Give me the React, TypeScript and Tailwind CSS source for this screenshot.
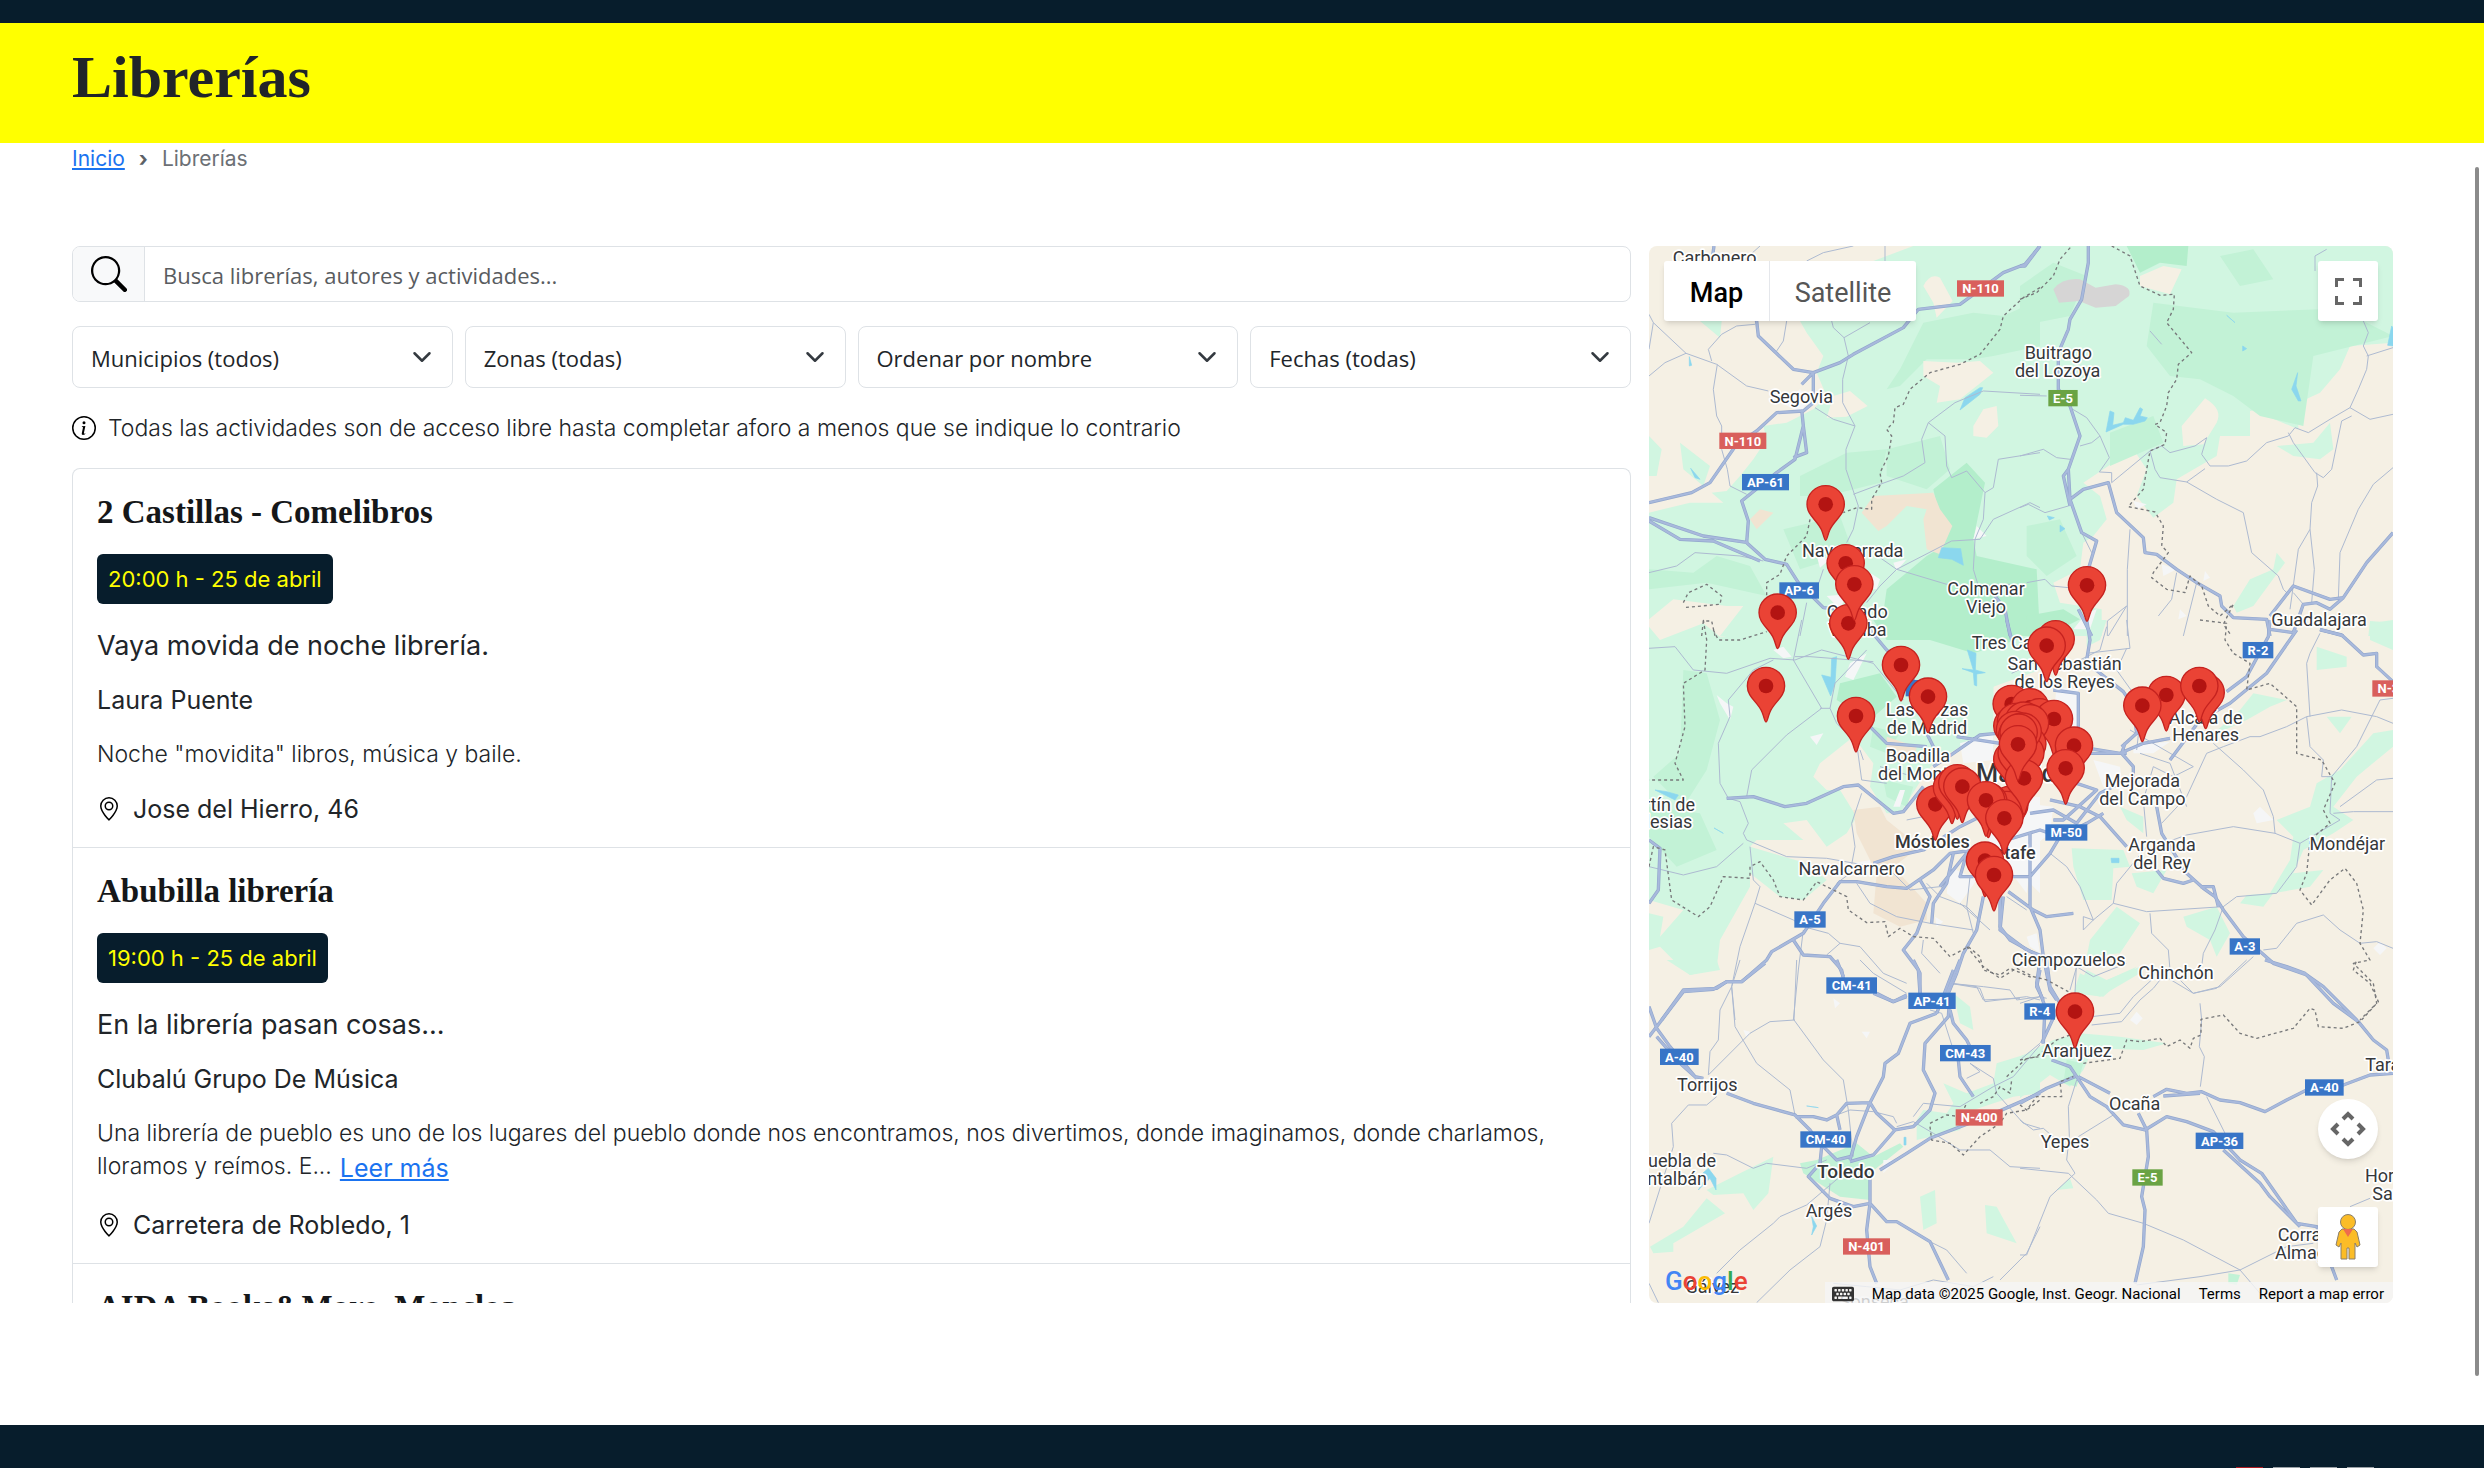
import { BsSearch, BsInfoCircle, BsGeoAlt } from "react-icons/bs";
import { FaKeyboard } from "react-icons/fa";

type Sheet = "a" | "b" | "c" | "d" | "e" | "f";
type Shape = [Sheet, string];

// The map is drawn from six sheets, each with its own origin
const origin: Record<Sheet, [number, number]> = {
  a: [-27, -30],
  b: [1113, -30],
  c: [-27, 1122],
  d: [873, 1122],
  e: [-27, 2142],
  f: [1113, 2142],
};

const forest: Shape[] = [
  ["a", "M820 30L700 75L560 75L480 255L500 290L550 360L530 410L560 480L520 520L440 560L370 570L380 610L340 670L300 720L260 765L215 770L250 800L150 800L27 830V1150L100 1090L260 1110L310 1110L240 1200H1210V30Z"],
  ["a", "M27 600L65 640L50 720L27 720ZM120 620L210 690L190 750L130 700ZM180 255H245L240 305Z"],
  ["b", "M1119 30V320L990 330L960 400L900 470L835 500V580L740 540L720 520L690 525V600H600L590 660L470 730L460 800L400 845L350 780L380 700L340 640L190 740L240 780L260 850L220 900L190 920L180 1000L100 1040L120 1100L245 1120V1200H0V30Z"],
  ["b", "M640 1110L690 1030L760 1000L770 950L795 980L700 1110L650 1130ZM770 630L880 620L930 560L940 640L900 670L820 660ZM1050 1155L1119 1160V1200H1045Z"],
  ["c", "M27 20L60 60L190 10L240 50L330 40L470 0H1200V150L1060 200V400L960 380L880 430L850 470L780 580L740 580L690 500L700 430L640 350L540 430L520 470L560 510L600 510L650 590L620 640L560 680L500 600L430 610L490 660L350 660L330 680L500 730L560 780L490 840L420 830L330 760V800L240 960L230 1045L150 1065L100 1020L60 980L27 990V880L70 890L60 950L130 870L27 840Z"],
  ["d", "M0 0H190V60L200 160L160 200L155 400L120 410L60 350L0 380ZM440 0H500L480 60L440 80ZM395 685L550 690L570 740L520 745L515 840L430 840L400 740ZM450 960L530 860L600 910L540 1000L440 1010ZM730 890L830 860L870 940L830 1010L810 960L740 920ZM575 760L680 750L640 820L590 800ZM540 560L610 590V640L560 600Z"],
  ["d", "M1010 600L1110 560L1130 490L1200 450L1300 340L1359 330V380L1250 470L1180 560L1240 600L1180 640L1090 690L1060 760L1150 750L1110 800L1000 820L970 860L900 850L920 825L990 820L1050 720L1060 650ZM1130 80L1220 110V140L1130 150ZM1160 290L1235 290L1200 340ZM1290 10L1359 0V90L1290 60ZM810 350L900 270L940 220L1040 240L990 260L920 300ZM400 1120L420 1060L480 1090L590 1040L490 1130Z"],
  ["e", "M80 0H230L240 30L150 45ZM940 100L990 140L1000 210L960 190ZM910 370L980 400L1060 370L1070 310L1200 270V400L1120 410L1000 450L960 510L830 540V480L850 450L920 460L940 430ZM200 690L300 640L400 590L385 700L340 750L310 700L220 705ZM30 860L130 800L200 715L255 760L100 850L100 875L40 880ZM840 710L885 690L890 790L850 810ZM1035 735L1070 740L1130 850L1040 820Z"],
  ["f", "M0 290L100 240L180 220L300 230L440 250L370 270L220 265L190 330L150 380L90 345L0 415ZM170 90L200 30L260 60L360 20V40L240 110ZM110 690L150 655L160 685Z"],
];

const denseForest: Shape[] = [
  ["a", "M780 400L850 260L1000 230L1090 240L1200 190V330L1060 360L1000 370L860 370L780 450L740 460ZM480 720L620 650L740 640L720 740L560 780L480 780ZM27 1000L160 1010L230 960L330 990L380 1080L200 1040L27 1060ZM820 620L900 600L930 700L860 760L740 720L740 640ZM430 880L600 840L640 950L480 1000Z"],
  ["b", "M0 150L100 80L200 120L150 240L0 270ZM400 200L640 230L900 220L1030 255L1119 300L1000 330L880 360L850 570L720 540L640 480L540 430L450 420L380 330ZM20 870L120 850L170 960L80 1020L20 960ZM270 590L400 540L430 620L270 690ZM600 60L700 40L760 130L660 150Z"],
  ["c", "M130 150L200 160L240 300L200 450L130 560L40 470L120 400ZM27 560L180 580L230 690L110 740L27 650ZM700 320L780 340L740 400L690 380ZM730 480L820 500L800 560L740 530Z"],
  ["e", "M480 610L530 600L650 550L700 590L780 550L790 560L690 640V720L600 710L490 640Z"],
  ["f", "M140 300L190 310L170 380L130 370ZM625 940L660 945L650 975L625 970Z"],
];

const deepForest: Shape[] = [
  ["a", "M880 760L980 680L1035 740L1000 910L1010 960L1190 1000L1200 1200H720L740 1060L860 960L910 930L900 850Z"],
  ["b", "M320 30H505L500 90L420 80L360 110ZM20 1140L130 1120L180 1150L120 1180L20 1190Z"],
  ["c", "M700 0H1180L1130 60L1000 100L870 60L740 60ZM600 190L720 160L770 230L690 300L590 240Z"],
];

const bare: Shape[] = [
  ["a", "M850 150Q870 110 900 125L938 195L890 245L880 200ZM850 375L950 380L1020 375L1060 410L960 490L890 500L900 450L850 420ZM1000 570L1030 520L1070 510L1075 570L1040 605L1000 600ZM580 480L630 465L683 510L620 542L560 545Z"],
  ["b", "M360 120L430 90L485 100L450 175L360 150ZM555 487Q610 520 590 560L550 625L490 630L485 570Z"],
];

const highland: Shape[] = [
  ["a", "M665 830L700 780L880 770L900 820L937 870L900 955L860 940L850 850L860 820L800 810L740 870L715 885ZM330 850L360 820L400 830L350 880Z"],
  ["c", "M640 570L720 560L740 600L840 680L760 740L860 850L860 900L780 920L700 880L710 760L650 640ZM740 350L830 380L820 430L740 400Z"],
];

const town: Shape[] = [
  ["a", "M1010 870L1040 900L1000 910ZM530 960L570 970L540 995ZM690 1010L720 1030L710 1060L680 1060ZM560 1080L620 1075L600 1120ZM760 980L800 970L770 1005ZM425 500L480 460L510 490L480 530Z"],
  ["b", "M425 985L470 1000L430 1020ZM200 1130L230 1120L210 1180L160 1180ZM555 1005L570 1025L550 1035ZM480 1120L500 1140L475 1150ZM340 795L380 805L350 820Z"],
  ["c", "M630 130L680 100L640 180L615 170ZM510 350L550 340L530 375ZM230 225L260 250L280 260L270 300L240 250ZM400 90L430 80L455 110L430 115ZM780 510L795 510L780 560L760 560ZM960 370L1060 340L1060 420L970 430ZM1060 540L1200 530V820L1100 720L1040 700ZM930 740L1010 780L960 850L920 820ZM885 890L910 905L890 920ZM640 730L690 720L690 750Z"],
  ["d", "M160 540L340 560L330 640L280 680L260 820L170 700ZM350 200L415 210V340L440 400L330 380ZM460 420L540 440L550 510L490 500ZM580 375L690 365L640 400L580 400ZM940 580L960 560L1000 600L950 610ZM260 950L290 940L300 1000L270 980ZM1300 985L1320 965L1340 985L1320 1005Z"],
  ["e", "M665 215L690 215L680 235ZM730 600L770 600L730 640ZM310 210L330 215L320 235ZM580 115L600 130L585 145Z"],
  ["f", "M330 180L350 155L368 175L350 195Z"],
];

const water: Shape[] = [
  ["a", "M960 522L975 485L1020 455L1028 455L1020 475ZM895 965L905 935L962 938L970 988L935 970ZM148 362L155 388L148 390ZM152 697L180 730L165 725Z"],
  ["b", "M258 588L270 525L282 530L278 568L310 560L316 545L340 553L360 515L368 520L360 540L382 545L375 555L340 565L310 565ZM815 460L833 410L828 450L843 495L835 495ZM1103 328L1115 270L1119 275V330ZM82 840L103 845L88 852ZM120 868L135 878L120 888ZM668 330L680 338L668 345ZM620 238L645 260Z"],
  ["c", "M575 115L590 110L585 190L572 228L545 165L573 172ZM45 510L80 515L115 525L105 540ZM222 624L250 640Z"],
  ["d", "M82 90L108 100L106 150L136 158L110 162L110 198L103 195L100 158L66 146L100 150ZM513 715H537V728H515Z"],
  ["e", "M205 625L228 655L228 690L210 655L175 690L190 665L188 640ZM515 770L530 798L515 825L520 800ZM500 438L535 443ZM792 532H798V555H792Z"],
];

const lanes: Shape[] = [
  ["a", "M27 235L40 260L138 352L230 385L320 450L385 465M40 260L27 340M138 352L75 380L27 420M232 385L220 460L230 540L245 570V640L262 700L270 750L320 775M345 265L290 270L245 295L205 340L215 375M440 255L430 315L410 345M500 75L550 50L640 30M735 30V80L720 110M575 255L580 275L612 305L690 260M612 305L625 360L608 430V500L645 570L618 640V700L655 810L640 880L620 920M525 515L580 550L645 570M1200 475L1030 465L945 500L865 560L845 610L855 680L790 720L720 745L640 775M865 560L915 600L920 690L935 725L980 705L1035 770L1030 850L1005 910L1000 1000L1015 1050L1110 1045M1200 650L1075 670L1060 755L1035 770M1200 815L1170 800L1060 850L1020 910L935 915L770 1000L720 1050L680 1100M720 965L770 1000L920 1045L1000 1050M27 1010L110 990L165 950L300 960L370 975M550 1000L530 1060M500 1100L480 1200M360 30L260 120"],
  ["b", "M0 478L80 480M150 515L200 545L240 600L268 665L238 708L275 710V740L390 645L425 630L450 650L525 630L560 605L545 655L570 690H625L680 675L740 620L805 600L825 575L865 590L930 550L990 515L1015 460L1040 400L1045 360L1030 330L1045 290L1030 255M1040 360L1119 335M990 515L1050 550L1119 535M995 540L965 555L935 700L910 725L885 710L820 620L805 590M390 645L405 700L420 725L500 738L555 698M500 738L590 790L670 830L695 950L775 1020L790 1060L805 1075M890 710L893 750L875 800L870 880L835 940L810 1120M870 880L883 1000L875 1100M1119 695L1060 745L1015 820L960 950L955 1090M180 630L215 620L240 600M0 660L70 640L110 665L150 670M0 815L25 805L75 830L145 810M330 880L322 1000V1200M470 1010L455 1090L415 1140M530 1040L490 1200M20 1040L75 1030L95 1050L145 1055M262 1200V1155L320 1110L265 1200M185 890L215 950M390 285L425 325M920 40L885 60V105M820 1070L850 1105"],
  ["c", "M27 85L105 80L160 150L260 160L390 115L465 120L545 90L700 130L790 240M460 120L485 0M460 120L545 265L440 345L335 450L320 530M465 110L510 110L700 125M400 120L340 150L265 240L270 290L235 370L240 490L265 535L300 545L325 610L310 640L320 660L440 710L560 715L700 740M680 90L585 190L570 265H540M570 265L590 310L650 370L665 480L740 490M665 520L635 610L645 680L630 760L590 790M310 670L230 740L130 765L27 740M330 680L340 780L360 800L345 850L300 980L275 1100L285 1200M345 850L460 900L490 920L565 940L600 970L660 980L730 1060L800 1090M490 930L475 1050L460 1200M600 970L560 1005M650 790L690 850L770 890L870 910L1000 930M860 790L900 830L980 860L1020 900M930 1090L1030 1100L1110 1110L1130 1140L1200 1130M720 440L820 470M660 390L670 420M860 610L960 560M800 600L850 590L900 610M850 960L845 1000L900 1060M990 770L980 860L1000 940M760 760L810 810L900 800"],
  ["d", "M215 160L300 120L400 130L480 90L500 20M440 100L570 85L560 0M560 85L530 150L580 220L600 300L590 390M600 400L690 430L740 560M570 330L760 440L700 470L640 440L610 540L620 650M800 400L850 380L930 350L960 350L1040 320L1100 290L1205 270L1310 290L1359 310M800 400L740 530L665 610M820 370L910 450L970 510L1000 590L1005 640M670 670L740 645L880 620L1005 640L1080 670L1200 600L1170 580L1175 470L1250 380L1320 240L1359 235M1100 290L1110 380L1150 420L1145 470H1175M1359 475L1310 480L1200 560M1180 580L1240 575L1359 575M1110 290L1100 130L1110 100L1140 40M1080 670L1070 740L1010 820L890 830L850 860L620 875L520 850L460 900L420 800L380 740L330 700M520 850L530 790L620 680M630 880L635 940L685 990L690 1050L760 1120L840 1100L940 1010M970 990L1010 985L1070 910L1150 885L1200 930L1260 970L1310 965L1359 985M850 860L825 930L790 1000L785 1040M560 1030L460 1070L410 1040L390 1110M640 1075L580 1130L540 1180L370 1200M30 1090L110 1100L130 1140L240 1135M430 890L460 900L430 930V890M60 850L150 930M200 830L260 870"],
  ["e", "M300 0L275 80L285 200L350 310L450 390L465 465M275 80L240 150L235 240L210 275L205 345M465 180L390 185L330 220L205 345M470 0L462 180L550 300L610 360L625 450L640 590M230 410L200 435L145 435L95 490L100 560L65 670L27 790M220 580L260 585L340 625L380 610L500 625L560 600M230 940L300 870L400 790L420 770L500 735L600 650M570 670L560 780L540 860L450 930L350 1028M590 465L630 450L700 455L760 470L770 490M660 0L700 40L800 100M870 150L905 160L940 270M930 70L1020 85L1035 125L1160 110L1200 120M980 355L1020 335L990 310L1060 355L1070 400L1150 490L1200 505M820 470L850 430L960 440L1060 380L1120 350L1200 255M770 500L820 485L880 520L960 570L1050 570L1110 620L1200 625M1200 800L1160 880L1080 960M27 970L55 1028M870 845L920 870L980 940M580 970L680 980L780 990L880 960L1000 980L1060 950"],
  ["f", "M0 130L60 110L80 115M215 195L305 185L360 120L400 85L420 60M420 40L520 100L590 85L680 0M540 130L545 180L538 260L553 290L541 380M560 410L615 520L640 580M0 480L40 510L70 505L110 540M175 530L280 465M170 360L145 440L148 530L140 600L165 640L90 710L20 885H0M0 625L145 640L230 720L265 760L370 790L490 840L660 930L540 950L350 975M660 930L750 885L800 860L880 850M660 930L720 1000M165 100L170 0M0 300L60 250M990 740L1050 715"],
];

const highways: Shape[] = [
  ["a", "M222 30L215 80L350 255L355 300L460 400L520 410L600 380L640 355L790 275L835 220L960 205L1090 110L1155 85L1200 30M520 410V500L490 525L410 530L350 585L290 625L210 740L155 770L27 800M520 410L485 445M485 520L490 570L465 670L410 710L305 795L325 855L320 920L375 970L440 985L475 1040L550 1115L600 1120M490 570L500 650L460 665M27 845L190 900L325 920M27 855L120 910L220 915L360 975M1065 1080L1095 1120L1110 1200"],
  ["b", "M0 90H15L60 30M205 30V80L185 190L150 250L145 280L115 350V460L150 510L180 600L145 700L150 790L185 890L230 915L205 1000M145 700L130 720L150 810M150 790L190 760L265 740L290 830L370 905L375 950L410 955L470 1000L530 1040L600 1080L605 1110L640 1145L740 1150L750 1200M750 1140L820 1050L930 1090L970 1085L1040 980L1119 890M750 1180L820 1190L850 1105L890 1100L930 1120L970 1085M900 1180L970 1200M175 1120L215 1200"],
  ["c", "M27 660L60 685L55 810L27 850M260 535L340 530L435 560L500 550L610 500L655 495L760 580L790 575L850 500M880 440L940 400L1020 345L1070 340M690 320L740 370L860 380M950 350L1080 370M700 730L760 710L850 690L960 620L1060 570M65 1200L130 1110L230 1105L260 1085L305 1085L380 1020L395 995L490 940L550 850L600 785H650L740 800L800 805L880 750L930 700L1000 690M460 960L490 1005L570 1010L605 1050L610 1075M710 1120L760 1145L800 1130M840 780L870 830L830 940L790 990L835 1050L840 1120M940 700L920 790L880 850L875 910M1030 830L1010 930L970 1000L950 1060L925 1120M1080 820V920L1110 960L1200 1010M690 30L740 90L820 180L860 340L890 400M900 800L980 700L960 770H1000"],
  ["d", "M200 0L215 60M440 0L450 60L440 120M340 210L415 220V380L540 400L610 370L690 355M430 120L550 215L580 260L590 340L545 380M990 0L985 50L920 170L860 215M1070 30L980 160L870 250L780 300L690 420M1140 30L1205 45L1270 105L1310 100V140L1359 185M555 370L545 400L580 440V490M270 580L340 570L410 610L480 520L540 490M330 540L420 560L480 590L560 680M410 490L470 510L370 600H340M440 400L560 400M270 640V860L300 930L310 1010L330 1110L350 1140M140 700L210 770H270L330 700L360 650L440 610L490 580M200 660L300 630L330 640M650 560L665 640L740 760L790 805L825 830L850 870L910 950L1000 1030L1100 1065L1150 1100L1250 1200M650 750L670 775L730 790L760 780M780 800L820 800L835 860M190 830L180 930L260 990L310 1010M205 815L280 870L320 890L400 880M300 1050L290 1100L310 1140"],
  ["e", "M27 230L130 95L220 88L260 65H305L375 10M27 140L50 205L90 260L165 350L190 355M50 230L120 310L170 355M260 400L340 430L465 465L510 510L545 560L540 610L505 650L570 715L640 740L690 730L740 785H770L870 845L925 960M465 470H520L560 480L590 465L620 430L690 428L710 460L765 510L700 585L630 605M590 465L600 510M550 560L590 600L630 590M890 160L810 190L775 280L735 310L730 350L690 428L650 530L630 600M930 100L925 170L855 250L850 330L885 400L870 450L820 500L765 510M930 150L940 190L980 240L990 260M955 300L960 350L1000 410M720 630L800 580L870 535L1040 470L1200 400M690 650V730L680 810L690 920L710 970M590 0L610 50M700 100L760 125L800 105M820 0L840 40V100M960 0L920 100M940 30L890 160"],
  ["f", "M60 0L50 70L75 140L70 250M80 0L90 80L120 130L65 250M95 300L150 320L210 410L260 440L310 495L375 510L440 470L500 485L580 515L660 600L725 640L830 790L890 800L950 960M175 350L270 400M0 430L80 385L165 350M400 410L440 388L500 400L545 395L600 420L660 428L735 455L800 420L860 390L970 375L1050 345L1119 340M430 408L540 400M355 460L380 510L385 590L365 710L375 750L370 860L345 970M610 570L720 670L750 710L840 800M735 0L800 20L855 40L940 130L1015 185L1060 240L1100 270L1105 300"],
];

const limits: Shape[] = [
  ["a", "M1200 155L1150 185L1090 240L1080 280L1020 355L960 385L870 410L810 460L790 505L765 515L760 560L740 580L755 600L745 660L720 710L725 740L695 790V820L650 815L610 830M510 850L500 900L440 960L420 1015L380 1040V1085M130 1100L145 1070L200 1045L245 1080L240 1105L130 1115M185 1200L190 1155L215 1155L225 1200"],
  ["b", "M0 190L50 170L100 120L120 70L155 30M275 30L330 60L360 150L420 178L463 175L460 220L440 260L515 350L475 385L470 430L445 470L440 510L420 560L405 565L440 590L435 625L390 645L380 700L370 760L335 800L325 812L405 828L430 870L425 930L445 950L400 1010L395 1025L440 1060L495 1070L510 1020L545 1050L565 1110L600 1140L640 1105L610 1165L635 1200"],
  ["c", "M190 0L200 60L195 150L130 190L135 320L105 430L130 480H27M220 30L235 60L300 60L380 35M27 740L40 680L75 690L95 840L175 890L210 860L250 770L330 775V740L360 725L400 780L420 830L490 840L530 785L620 830L625 870L680 908L735 905L745 950L780 925L820 950L880 955L930 1010L985 980L1020 1010L1030 1050L1080 1065L1110 1045L1180 1075"],
  ["d", "M780 0L860 10L855 60L880 100L930 130L920 210L990 190L1070 260V400L1145 420L1185 490L1150 570L1170 610L1110 660L1100 760L1080 810L1115 855L1170 780L1215 745L1250 790L1270 870L1260 970L1290 1020L1240 1030L1300 1090L1310 1150L1260 1200M80 980L130 1040L180 1075L230 1045L280 1070L320 1080L385 1115"],
  ["e", "M870 490L920 465L960 470L980 430M870 500L875 540L930 550L970 585L1020 530L1080 490L1100 460L1160 450L1200 420M1020 430L1060 410L1080 380L1110 400L1115 360M1100 350L1160 295L1200 290"],
  ["f", "M0 300L50 290L110 240L150 225M190 310L300 295L320 240L360 245L420 235L440 260L480 240L510 265L520 235L543 225V178L610 165L660 220L710 235L820 205L870 145L885 150L895 200L970 205L1020 185L1075 125L1050 70L1000 30L1010 0M0 435L20 450L50 410L125 410L120 365L160 350"],
];

const labels: [Sheet, number, number, string, ("start" | "end")?][] = [
  ["a", 224, 84, "Carbonero"],
  ["a", 484, 500, "Segovia"],
  ["b", 115, 370, "Buitrago"],
  ["b", 113, 424, "del Lozoya"],
  ["a", 638, 963, "Navacerrada"],
  ["a", 652, 1147, "Collado"],
  ["a", 652, 1200, "Villalba"],
  ["a", 1038, 1077, "Colmenar"],
  ["a", 1038, 1131, "Viejo"],
  ["b", 897, 1170, "Guadalajara"],
  ["c", 861, 289, "Las Rozas"],
  ["c", 861, 342, "de Madrid"],
  ["c", 834, 425, "Boadilla"],
  ["c", 834, 479, "del Monte"],
  ["c", 635, 766, "Navalcarnero"],
  ["c", 165, 572, "Martín de", "end"],
  ["c", 157, 625, "Valdeiglesias", "end"],
  ["d", 95, 87, "Tres Cantos", "start"],
  ["d", 374, 151, "San Sebastián"],
  ["d", 374, 204, "de los Reyes"],
  ["d", 797, 311, "Alcalá de"],
  ["d", 797, 364, "Henares"],
  ["d", 607, 502, "Mejorada"],
  ["d", 607, 556, "del Campo"],
  ["d", 666, 692, "Arganda"],
  ["d", 666, 747, "del Rey"],
  ["d", 1222, 689, "Mondéjar"],
  ["d", 386, 1039, "Ciempozuelos"],
  ["d", 708, 1077, "Chinchón"],
  ["f", 170, 292, "Aranjuez"],
  ["f", 344, 450, "Ocaña"],
  ["f", 135, 564, "Yepes"],
  ["f", 1036, 334, "Tarancón", "start"],
  ["f", 1035, 665, "Horcajo de", "start"],
  ["f", 1057, 719, "Santiago", "start"],
  ["f", 773, 842, "Corral de", "start"],
  ["f", 765, 896, "Almaguer", "start"],
  ["e", 202, 393, "Torrijos"],
  ["e", 228, 621, "Puebla de", "end"],
  ["e", 201, 675, "Montalbán", "end"],
  ["e", 567, 771, "Argés"],
  ["e", 217, 1000, "Gálvez"],
  ["e", 703, 1045, "Sonseca"],
];

const blue = "#3875c7";
const red = "#d95f5c";
const green = "#6aa344";

const shields: [Sheet, number, number, number, string, string][] = [
  ["a", 951, 133, 141, red, "N-110"],
  ["a", 238, 590, 141, red, "N-110"],
  ["a", 306, 714, 141, blue, "AP-61"],
  ["a", 418, 1039, 119, blue, "AP-6"],
  ["b", 85, 462, 88, green, "E-5"],
  ["c", 797, 180, 60, blue, ""],
  ["c", 463, 874, 94, blue, "A-5"],
  ["c", 559, 1072, 152, blue, "CM-41"],
  ["c", 805, 1118, 142, blue, "AP-41"],
  ["d", 908, 66, 92, blue, "R-2"],
  ["d", 1297, 181, 141, red, "N-320"],
  ["d", 316, 613, 126, blue, "M-50"],
  ["d", 869, 955, 91, blue, "A-3"],
  ["f", 13, 130, 92, blue, "R-4"],
  ["f", 855, 358, 116, blue, "A-40"],
  ["f", 527, 518, 143, blue, "AP-36"],
  ["f", 337, 628, 91, green, "E-5"],
  ["e", 60, 266, 116, blue, "A-40"],
  ["e", 900, 255, 152, blue, "CM-43"],
  ["e", 947, 448, 141, red, "N-400"],
  ["e", 481, 514, 152, blue, "CM-40"],
  ["e", 609, 835, 141, red, "N-401"],
];

// Later pins lie over earlier ones
const pins: [Sheet, number, number][] = [
  ["a", 557, 805],
  ["a", 617, 982],
  ["a", 625, 1162],
  ["a", 643, 1045],
  ["b", 201, 1048],
  ["d", 347, 58],
  ["d", 320, 77],
  ["a", 413, 1130],
  ["c", 783, 135],
  ["c", 378, 198],
  ["d", 797, 218],
  ["d", 679, 225],
  ["d", 778, 198],
  ["c", 864, 230],
  ["d", 215, 252],
  ["d", 270, 262],
  ["d", 607, 257],
  ["c", 648, 288],
  ["d", 298, 292],
  ["d", 217, 318],
  ["d", 228, 306],
  ["d", 252, 302],
  ["d", 342, 297],
  ["d", 270, 310],
  ["d", 225, 330],
  ["d", 232, 346],
  ["d", 262, 372],
  ["d", 402, 377],
  ["d", 217, 418],
  ["d", 230, 400],
  ["d", 256, 400],
  ["d", 248, 335],
  ["d", 377, 445],
  ["c", 886, 553],
  ["c", 936, 503],
  ["c", 952, 490],
  ["c", 967, 500],
  ["d", 208, 555],
  ["d", 200, 570],
  ["d", 252, 475],
  ["d", 236, 338],
  ["d", 234, 373],
  ["c", 1045, 545],
  ["c", 1038, 541],
  ["c", 1093, 595],
  ["d", 135, 722],
  ["d", 162, 765],
  ["f", 165, 155],
];

function Layer({ shapes, className }: { shapes: Shape[]; className: string }) {
  return (
    <g className={className} strokeLinejoin="round">
      {shapes.map(([sheet, d]) => (
        <path
          key={d}
          d={d}
          transform={`translate(${origin[sheet][0]} ${origin[sheet][1]})`}
        />
      ))}
    </g>
  );
}

function MapDrawing() {
  return (
    <svg
      className="block w-full h-full"
      viewBox="0 0 2232 3171"
      preserveAspectRatio="xMidYMid slice"
      fontFamily="Roboto, sans-serif"
      role="img"
      aria-label="Mapa de librerías"
    >
      <rect width="2232" height="3171" fill="#f5f0e4" />
      <Layer shapes={forest} className="fill-[#d1f6e1]" />
      <Layer shapes={denseForest} className="fill-[#c2f2d6]" />
      <Layer shapes={deepForest} className="fill-[#b3eecb]" />
      <Layer shapes={bare} className="fill-[#f5f0e4]" />
      <Layer shapes={highland} className="fill-[#f1e4d2]" />
      <path
        d="M1213 130Q1240 95 1293 100L1340 125L1400 115Q1450 120 1440 150L1400 180L1340 185L1290 165L1230 170Z"
        fill="#d6d5d5"
      />
      <Layer shapes={town} className="fill-[#f5f6f7]" />
      <Layer
        shapes={water}
        className="fill-[#8bd7ee] stroke-[#8bd7ee] stroke-2"
      />
      <Layer
        shapes={lanes}
        className="fill-none stroke-[#adbad1] stroke-[3px]"
      />
      <Layer
        shapes={highways}
        className="fill-none stroke-[#93a7cd] stroke-[10px]"
      />
      <Layer
        shapes={highways}
        className="fill-none stroke-[#a8b9dc] stroke-[6px]"
      />
      <Layer
        shapes={limits}
        className="fill-none stroke-[#77787a] stroke-[4px] [stroke-dasharray:9_9]"
      />

      {shields.map(([sheet, x, y, width, color, name]) => (
        <g
          key={`${name}-${x}`}
          transform={`translate(${origin[sheet][0] + x} ${origin[sheet][1] + y})`}
        >
          <rect width={width} height="49" fill={color} />
          <text
            x={width / 2}
            y="39"
            textAnchor="middle"
            fill="#fff"
            fontSize="39"
            fontWeight="700"
          >
            {name}
          </text>
        </g>
      ))}

      <g
        fill="#35373a"
        stroke="#fff"
        strokeWidth="10"
        strokeLinejoin="round"
        paintOrder="stroke"
        fontSize="54"
      >
        {labels.map(([sheet, x, y, name, anchor = "middle"]) => (
          <text
            key={name}
            x={origin[sheet][0] + x}
            y={origin[sheet][1] + y}
            textAnchor={anchor}
          >
            {name}
          </text>
        ))}
        <g fontWeight="500" textAnchor="middle">
          <text x="850" y="1805">
            Móstoles
          </text>
          <text x="1080" y="1838">
            Getafe
          </text>
          <text x="590" y="2795" fontSize="57">
            Toledo
          </text>
          <text x="1101" y="1609" fontSize="76">
            Madrid
          </text>
        </g>
      </g>

      {pins.map(([sheet, x, y]) => (
        <g
          key={`${sheet}-${x}-${y}`}
          transform={`translate(${origin[sheet][0] + x} ${origin[sheet][1] + y})`}
        >
          <path
            d="M0 108C-4 108-6 92-12 78C-24 48-56 34-56 0A56 56 0 1 1 56 0C56 34 24 48 12 78C6 92 4 108 0 108Z"
            fill="#ea4335"
            stroke="#c5221f"
            strokeWidth="4"
          />
          <circle r="22" fill="#b31412" />
        </g>
      ))}
    </svg>
  );
}

function BookshopMap() {
  return (
    <section className="relative h-full overflow-hidden rounded-lg font-[Roboto,sans-serif]">
      <MapDrawing />

      <div className="absolute top-[15px] left-[15px] flex h-[60px] overflow-hidden rounded-[3px] bg-white text-[27px] shadow-md">
        <button className="w-[105px] pt-1 font-medium text-black">Map</button>
        <button className="w-[147px] border-l border-gray-200 pt-1 text-[#565656]">
          Satellite
        </button>
      </div>

      <button
        aria-label="Toggle fullscreen view"
        className="absolute top-[15px] right-[15px] flex size-[60px] items-center justify-center rounded-[3px] bg-white shadow-md"
      >
        <svg className="size-[27px]" viewBox="0 0 18 18" fill="#666">
          <path d="M0 0v6h2V2h4V0H0zm16 0h-4v2h4v4h2V0h-2zm0 16h-4v2h6v-6h-2v4zM2 12H0v6h6v-2H2v-4z" />
        </svg>
      </button>

      <div className="absolute right-[15px] bottom-9 flex flex-col gap-12">
        <button
          aria-label="Map camera controls"
          className="flex size-[60px] items-center justify-center rounded-full bg-white shadow-md"
        >
          <svg
            className="size-9"
            viewBox="0 0 36 36"
            fill="none"
            stroke="#666"
            strokeWidth="4"
          >
            <path d="M13 8l5-5 5 5M13 28l5 5 5-5M8 13l-5 5 5 5M28 13l5 5-5 5" />
          </svg>
        </button>
        <button
          aria-label="Street View"
          className="flex size-[60px] items-center justify-center rounded-[3px] bg-white shadow-md"
        >
          <svg className="h-[46px] w-[26px]" viewBox="0 0 26 46">
            <g fill="#fbbc27" stroke="#8a7f6c" strokeWidth="1">
              <path d="M7 15h12l3 3 3 13-3 2-2-4v16h-6V34h-2v11H6V29l-2 4-3-2 3-13z" />
              <circle cx="13" cy="8" r="7.500" />
            </g>
            <path d="M8 15h10l-5 8z" fill="#ee6b4d" />
          </svg>
        </button>
      </div>

      <a
        href="#google"
        aria-label="Google"
        className="absolute bottom-1 left-4 text-[26px] leading-9 font-medium"
      >
        <span className="text-[#4285f4]">G</span>
        <span className="text-[#ea4335]">o</span>
        <span className="text-[#fbbc05]">o</span>
        <span className="text-[#4285f4]">g</span>
        <span className="text-[#34a853]">l</span>
        <span className="text-[#ea4335]">e</span>
      </a>

      <div className="absolute right-0 bottom-0 flex h-[21px] items-center bg-[#f5f5f5]/80 pt-[3px] pr-[9px] pl-[7px] text-[15px] leading-[18px] whitespace-nowrap text-black">
        <FaKeyboard className="mr-[18px] size-[22px] text-[#333]" />
        <span className="mr-[18px]">
          Map data ©2025 Google, Inst. Geogr. Nacional
        </span>
        <a href="#terms" className="mr-[18px]">
          Terms
        </a>
        <a href="#report">Report a map error</a>
      </div>
    </section>
  );
}

const filters = [
  "Municipios (todos)",
  "Zonas (todas)",
  "Ordenar por nombre",
  "Fechas (todas)",
];

const bookshops = [
  {
    name: "2 Castillas - Comelibros",
    date: "20:00 h - 25 de abril",
    title: "Vaya movida de noche librería.",
    author: "Laura Puente",
    description: 'Noche "movidita" libros, música y baile.',
    address: "Jose del Hierro, 46",
  },
  {
    name: "Abubilla librería",
    date: "19:00 h - 25 de abril",
    title: "En la librería pasan cosas...",
    author: "Clubalú Grupo De Música",
    description:
      "Una librería de pueblo es uno de los lugares del pueblo donde nos encontramos, nos divertimos, donde imaginamos, donde charlamos, lloramos y reímos. E...",
    more: true,
    address: "Carretera de Robledo, 1",
  },
  {
    name: "AIDA Books&More. Moncloa",
  },
];

export default function App() {
  return (
    <div className="min-h-screen bg-white font-[Inter,sans-serif] text-[#212529]">
      <div className="h-[23px] bg-[#071d2c]" />
      <header className="bg-[#ffff00] px-[72px] pt-[18px] pb-[30px]">
        <h1 className="font-['Liberation_Serif',serif] text-[60px] leading-[72px] font-bold">
          Librerías
        </h1>
      </header>

      <nav
        aria-label="Ruta"
        className="flex items-center gap-[14px] px-[72px] text-[21px] leading-8"
      >
        <a href="#inicio" className="text-[#1a73f0] underline">
          Inicio
        </a>
        <span className="font-bold text-[#5c6166]">›</span>
        <span className="text-[#6c7075]">Librerías</span>
      </nav>

      <main className="grid h-[72vh] grid-cols-[1559fr_744fr] gap-[18px] mt-[71px] mb-[122px] ml-[72px] mr-[91px]">
        <section className="flex h-full min-h-0 flex-col">
          <div className="font-['Open_Sans',sans-serif] text-[22px]">
            <div className="flex h-14 overflow-hidden rounded-lg border border-[#dee2e6]">
              <label
                htmlFor="search"
                aria-label="Buscar"
                className="flex w-[72px] items-center justify-center border-r border-[#dee2e6] bg-[#f8f9fa] text-black"
              >
                <BsSearch className="size-9" />
              </label>
              <input
                id="search"
                type="text"
                placeholder="Busca librerías, autores y actividades..."
                className="min-w-0 flex-1 px-[18px] pt-[2px] outline-none placeholder:text-[#595c5f]"
              />
            </div>

            <div className="mt-6 grid grid-cols-4 gap-3">
              {filters.map((filter) => (
                <div key={filter} className="relative">
                  <select
                    aria-label={filter}
                    className="h-[62px] w-full appearance-none rounded-lg border border-[#dee2e6] bg-white px-[18px] pt-[2px]"
                  >
                    <option>{filter}</option>
                  </select>
                  <svg
                    className="pointer-events-none absolute top-[21px] right-[21px] size-5"
                    viewBox="0 0 16 16"
                    fill="none"
                    stroke="#343a40"
                    strokeWidth="2"
                    strokeLinecap="round"
                    strokeLinejoin="round"
                  >
                    <path d="m2 5 6 6 6-6" />
                  </svg>
                </div>
              ))}
            </div>
          </div>

          <p className="mt-6 flex items-center gap-3 text-[23px] leading-8 font-light">
            <BsInfoCircle className="size-6 text-black" />
            Todas las actividades son de acceso libre hasta completar aforo a
            menos que se indique lo contrario
          </p>

          <ul className="mt-6 min-h-0 flex-1 overflow-hidden rounded-t-lg border border-b-0 border-[#dee2e6]">
            {bookshops.map((shop) => (
              <li
                key={shop.name}
                className="border-b border-[#dee2e6] px-6 pt-[23px] pb-5"
              >
                <h2 className="font-['Liberation_Serif',serif] text-[33px] leading-10 font-bold text-[#151719]">
                  {shop.name}
                </h2>
                {shop.date && (
                  <>
                    <p className="mt-[22px] h-[50px] w-fit rounded-md bg-[#071d2c] px-[11px] text-[22px] leading-[50px] text-[#ffff00]">
                      {shop.date}
                    </p>
                    <h3 className="mt-[22px] text-[27px] leading-10">
                      {shop.title}
                    </h3>
                    <p className="mt-4 text-[25px] leading-9">{shop.author}</p>
                    <div className="mt-5 text-[23px] leading-[33px] font-light">
                      {shop.description}
                      {shop.more && (
                        <a
                          href="#leer-mas"
                          className="ml-2 inline-block align-top text-[25px] leading-[37px] font-normal text-[#1a73f0] underline"
                        >
                          Leer más
                        </a>
                      )}
                    </div>
                    <p className="mt-5 flex items-center gap-3 text-[25px] leading-9">
                      <BsGeoAlt className="size-6 text-black" />
                      {shop.address}
                    </p>
                  </>
                )}
              </li>
            ))}
          </ul>
        </section>

        <BookshopMap />
      </main>

      <footer className="flex h-[43px] items-end justify-end gap-[10px] overflow-hidden bg-[#071d2c] pr-[110px]">
        <span className="h-px w-[27px] bg-[#b01c22]" />
        <span className="h-px w-[27px] bg-[#9aa1a7]" />
        <span className="h-px w-[27px] bg-[#9aa1a7]" />
        <span className="h-px w-[27px] bg-[#9aa1a7]" />
      </footer>

      <div className="fixed top-[167px] right-[5px] bottom-[92px] w-1 rounded-full bg-[#8b8b8b]" />
    </div>
  );
}
